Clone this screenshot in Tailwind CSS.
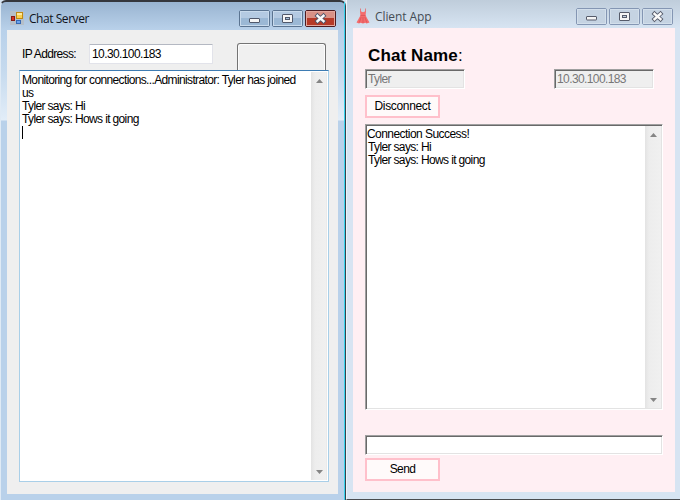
<!DOCTYPE html>
<html lang="en">
<head>
<meta charset="utf-8">
<title>Chat</title>
<script src="https://cdn.jsdelivr.net/npm/@tailwindcss/browser@4"></script>
</head>
<body class="bg-white overflow-hidden">
<div class="flex w-[680px] h-[500px] overflow-hidden bg-[#d7e4f2] font-['Liberation_Sans',Arial,sans-serif] text-[12px] leading-[13px] text-black">

  <!-- Server window -->
  <section class="w-[346px] h-[500px] shrink-0 flex flex-col rounded-t-[6px] border-t-2 border-t-[#35373d] border-l border-l-[#dfeaf5] border-r border-r-[#35434e] bg-[linear-gradient(to_bottom,#99b4d1_0px,#b9d1ea_28px,#b9d1ea_30px,#c6daee_70px,#e2edf8_118px,#b9d1ea_119px)]">
    <div class="grow flex flex-col pl-[6px] pr-[6px] pb-[6px] border-r border-r-[#38d4ee]">
      <header class="h-[28px] shrink-0 flex items-start pl-[3px] pr-[2px]">
        <svg class="mt-[9px] shrink-0" width="14" height="14" viewBox="0 0 14 14">
          <rect width="14" height="14" fill="#b5bfc9"/>
          <rect x="1.500" y="5.500" width="3" height="4" fill="#d93222" stroke="#861c16"/>
          <rect x="6.500" y="1.500" width="6" height="6" fill="#fbd04e" stroke="#c08a12"/>
          <rect x="7" y="2" width="5" height="2" fill="#fdeaa0"/>
          <rect x="6.500" y="9.500" width="4" height="3" fill="#6ba3ee" stroke="#3568b4"/>
        </svg>
        <h1 class="ml-[5px] mt-[9px] grow font-['Open_Sans','Noto_Sans',sans-serif] text-[12px] leading-[16px] tracking-[-0.45px] text-[#10141c]">Chat Server</h1>
        <div class="flex gap-[2px] mt-[8px]">
          <svg width="31" height="17" viewBox="0 0 31 17"><rect x=".5" y=".5" width="30" height="16" rx="1.500" fill="#b4cae2" stroke="#5b7491"/><rect x="1.500" y="8" width="28" height="8" fill="#9bb8d5"/><rect x="1.500" y="1.500" width="28" height="14" fill="none" stroke="#c8daec"/><rect x="10.500" y="8.500" width="10" height="4" rx=".5" fill="#f5f5f5" stroke="#50586b"/></svg>
          <svg width="31" height="17" viewBox="0 0 31 17"><rect x=".5" y=".5" width="30" height="16" rx="1.500" fill="#b4cae2" stroke="#5b7491"/><rect x="1.500" y="8" width="28" height="8" fill="#9bb8d5"/><rect x="1.500" y="1.500" width="28" height="14" fill="none" stroke="#c8daec"/><rect x="10.500" y="4.500" width="10" height="8" rx=".5" fill="#f5f5f5" stroke="#50586b"/><rect x="13.500" y="7.500" width="4" height="2" fill="#a4bfd9" stroke="#50586b"/></svg>
          <svg width="31" height="17" viewBox="0 0 31 17"><rect x=".5" y=".5" width="30" height="16" rx="1.500" fill="#d99186" stroke="#4d1b20"/><rect x="1.500" y="8" width="28" height="8" fill="#b63a28"/><rect x="1.500" y="1.500" width="28" height="14" fill="none" stroke="#e3a79d"/><path d="M12.500 5.800L18.500 11.200M18.500 5.800L12.500 11.200" stroke="#50566a" stroke-width="4.200" stroke-linecap="square"/><path d="M12.500 5.800L18.500 11.200M18.500 5.800L12.500 11.200" stroke="#fafafa" stroke-width="2.400" stroke-linecap="square"/></svg>
        </div>
      </header>
      <main class="grow flex flex-col bg-[#efefef] pl-[12px] pt-[13px] pb-[12px] pr-[9px]">
        <div class="h-[27px] shrink-0 flex items-start">
          <label class="w-[70px] pl-[3px] mt-[5px] whitespace-nowrap tracking-[-0.65px]">IP Address:</label>
          <div class="w-[124px] h-[20px] mt-[1px] bg-white border border-[#e2e3ea] border-t-[#b4b8c2] rounded-[1px] pl-[2px] pt-[3px] tracking-[-0.6px]">10.30.100.183</div>
          <div class="ml-[24px] w-[89px] h-[27px] rounded-t-[3px] border border-b-0 border-[#747474] bg-[#f0f0f0] shadow-[inset_1px_1px_0_#fcfcfc,inset_-1px_0_0_#fcfcfc]"></div>
        </div>
        <div class="grow flex bg-white border border-[#a9cfe8] border-t-[#3e7cb3]">
          <div class="grow pt-[3px] pl-[2px] whitespace-nowrap tracking-[-0.64px]">
            <p>Monitoring for connections...Administrator: Tyler has joined</p>
            <p>us</p>
            <p>Tyler says: Hi</p>
            <p>Tyler says: Hows it going</p>
            <div class="w-px h-[13px] bg-black"></div>
          </div>
          <div class="w-[16px] shrink-0 my-px mr-px flex flex-col items-center justify-between bg-[linear-gradient(to_right,#e3e3e3_0px,#ededed_4px,#f0f0f0_15px,#e4e4e4_16px)]">
            <svg class="mt-[7px]" width="7" height="4" viewBox="0 0 7 4"><path d="M3.500 0L7 4H0Z" fill="#858585"/></svg>
            <svg class="mb-[6px]" width="7" height="4" viewBox="0 0 7 4"><path d="M3.500 4L7 0H0Z" fill="#858585"/></svg>
          </div>
        </div>
      </main>
    </div>
  </section>

  <!-- Client window -->
  <section class="w-[334px] h-[500px] shrink-0 flex flex-col border-b border-b-[#4a4c50] border-l border-l-[#eef4fa] pl-[6px] pr-[5px] pb-[7px] bg-[linear-gradient(to_bottom,#bfcddb_0px,#d7e4f2_28px)]">
    <header class="h-[28px] shrink-0 flex items-start pl-[3px] pr-[2px]">
      <svg class="mt-[8px] shrink-0" width="14" height="16" viewBox="0 0 14 16">
        <path d="M4.500 4V.5M9.500 4V.5" stroke="#e07c80" stroke-width="1" fill="none"/>
        <path d="M4 3L7 4.200L10 3L9.600 7.500L11.500 11L13.500 14.500L10.500 15.500L9.500 14.700L7 15.500L4.500 14.700L3 15.500L.5 14.500L2.500 11L4.400 7.500Z" fill="#f46c6c"/>
        <path d="M4.500 7.500H9.500M5.200 9L3.300 14.500M7 9V15M8.800 9L10.800 14.500" stroke="#d55156" stroke-width=".7" fill="none"/>
      </svg>
      <h1 class="ml-[5px] mt-[9px] grow font-['Open_Sans','Noto_Sans',sans-serif] text-[12px] leading-[16px] tracking-[-0.1px] text-[#454c55]">Client App</h1>
      <div class="flex gap-[2px] mt-[8px]">
        <svg width="31" height="17" viewBox="0 0 31 17"><rect x=".5" y=".5" width="30" height="16" rx="1.500" fill="#c5d3e2" stroke="#8496b3"/><rect x="1.500" y="1.500" width="28" height="14" fill="none" stroke="#d3dfeb"/><rect x="10.500" y="8.500" width="10" height="3.500" rx=".5" fill="#f5f5f5" stroke="#565b6a"/></svg>
        <svg width="31" height="17" viewBox="0 0 31 17"><rect x=".5" y=".5" width="30" height="16" rx="1.500" fill="#c5d3e2" stroke="#8496b3"/><rect x="1.500" y="1.500" width="28" height="14" fill="none" stroke="#d3dfeb"/><rect x="10.500" y="4.500" width="10" height="8" rx=".5" fill="#f5f5f5" stroke="#565b6a"/><rect x="13.500" y="7.500" width="4" height="2" fill="#c5d3e2" stroke="#565b6a"/></svg>
        <svg width="31" height="17" viewBox="0 0 31 17"><rect x=".5" y=".5" width="30" height="16" rx="1.500" fill="#c5d3e2" stroke="#8496b3"/><rect x="1.500" y="1.500" width="28" height="14" fill="none" stroke="#d3dfeb"/><path d="M12.500 5.800L18.500 11.200M18.500 5.800L12.500 11.200" stroke="#565b6a" stroke-width="4.200" stroke-linecap="square"/><path d="M12.500 5.800L18.500 11.200M18.500 5.800L12.500 11.200" stroke="#fafafa" stroke-width="2.400" stroke-linecap="square"/></svg>
      </div>
    </header>
    <main class="grow flex flex-col bg-[#ffeff3] pl-[12px] pr-[12px] pt-[18px]">
      <h2 class="h-[23px] shrink-0 pl-[3px] text-[17px] leading-[20px] tracking-[0.12px] font-bold whitespace-nowrap">Chat Name<span class="font-normal">:</span></h2>
      <div class="flex justify-between pr-[9px]">
        <div class="w-[100px] h-[20px] bg-[#efefef] border border-t-[#a0a0a0] border-l-[#a0a0a0] border-r-white border-b-white shadow-[inset_1px_1px_0_#696969,inset_-1px_-1px_0_#e3e3e3] pl-[2px] pt-[3px] text-[#777] tracking-[-0.6px]">Tyler</div>
        <div class="w-[100px] h-[20px] bg-[#efefef] border border-t-[#a0a0a0] border-l-[#a0a0a0] border-r-white border-b-white shadow-[inset_1px_1px_0_#696969,inset_-1px_-1px_0_#e3e3e3] pl-[2px] pt-[3px] text-[#777] tracking-[-0.6px]">10.30.100.183</div>
      </div>
      <button class="mt-[6px] w-[75px] h-[23px] shrink-0 border-2 border-[#ffc0cb] bg-[#fffafa] leading-[19px] tracking-[-0.33px]">Disconnect</button>
      <div class="mt-[6px] h-[286px] shrink-0 flex bg-white border border-t-[#a0a0a0] border-l-[#a0a0a0] border-r-white border-b-white shadow-[inset_1px_1px_0_#696969,inset_-1px_-1px_0_#e3e3e3] p-px">
        <div class="grow pt-[2px] whitespace-nowrap tracking-[-0.64px]">
          <p class="tracking-[-0.55px]">Connection Success!</p>
          <p class="pl-px">Tyler says: Hi</p>
          <p class="pl-px">Tyler says: Hows it going</p>
        </div>
        <div class="w-[16px] shrink-0 flex flex-col items-center justify-between bg-[linear-gradient(to_right,#e3e3e3_0px,#ededed_4px,#f0f0f0_16px)]">
          <svg class="mt-[7px]" width="7" height="4" viewBox="0 0 7 4"><path d="M3.500 0L7 4H0Z" fill="#858585"/></svg>
          <svg class="mb-[6px]" width="7" height="4" viewBox="0 0 7 4"><path d="M3.500 4L7 0H0Z" fill="#858585"/></svg>
        </div>
      </div>
      <div class="mt-[25px] h-[20px] shrink-0 bg-white border border-t-[#a0a0a0] border-l-[#a0a0a0] border-r-white border-b-white shadow-[inset_1px_1px_0_#696969,inset_-1px_-1px_0_#e3e3e3]"></div>
      <button class="mt-[3px] w-[75px] h-[23px] shrink-0 border-2 border-[#ffc0cb] bg-[#fffafa] leading-[19px] tracking-[-0.6px]">Send</button>
    </main>
  </section>
</div>
</body>
</html>
